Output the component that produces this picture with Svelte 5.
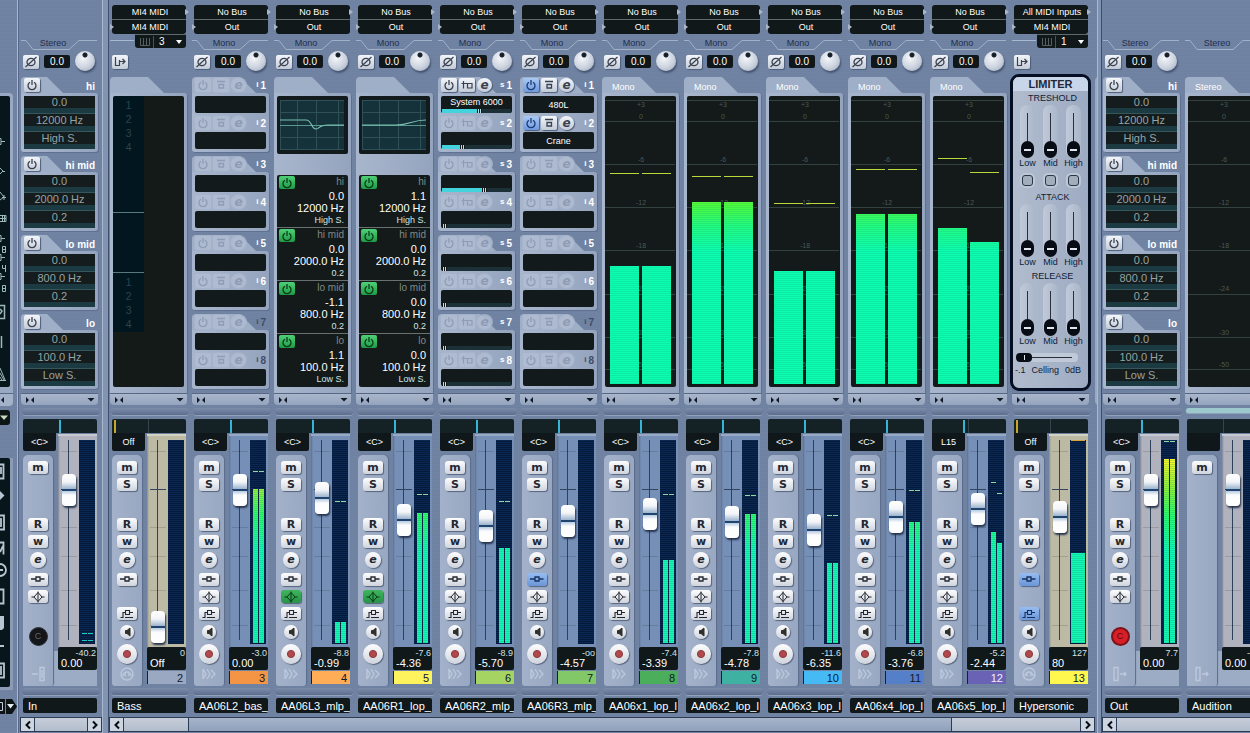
<script>
  const eqFlat = [
    { band: 'hi', rows: ['0.0', '12000 Hz', 'High S.'] },
    { band: 'hi mid', rows: ['0.0', '2000.0 Hz', '0.2'] },
    { band: 'lo mid', rows: ['0.0', '800.0 Hz', '0.2'] },
    { band: 'lo', rows: ['0.0', '100.0 Hz', 'Low S.'] }
  ];
  const bands = (a, b, c, d) => eqFlat.map((e, i) => ({ band: e.band, rows: [[a, b, c, d][i], e.rows[1], e.rows[2]] }));

  const emptyInserts = Array.from({ length: 8 }, () => ({}));
  const inputs = [
    { name: 'In', kind: 'bus', gain: true, view: 'eq', pan: '<C>', panPos: 36, fader: 139, val: '0.00', peak: '-40.2', buttons: 'm.RWeid', clip: 'off', glyph: 'in', levels: [0, 0], peaks: [2, 9], cold: true }
  ];
  const tracks = [
    { name: 'Bass', kind: 'midi', inp: 'MI4 MIDI', out: 'MI4 MIDI', midi: '3', view: 'midi', pan: 'Off', panPos: 2, fader: 2, val: 'Off', peak: '0', no: 2, color: '#9aa9c1', buttons: 'mSRWei.bsr', glyph: 'midi', levels: [] },
    { name: 'AA06L2_bas_', view: 'ins', slots: emptyInserts, dim: 7, fader: 139, val: '0.00', peak: '-3.0', no: 3, color: '#f49445', levels: [154, 154], peaks: [171, 171] },
    { name: 'AA06L3_mlp_', view: 'curve', curve: 'M0 20H26C32 20 31 29 36 29C40 29 38 25 48 25H64', eq: bands('0.0', '0.0', '-1.1', '1.1'), fader: 131, val: '-0.99', peak: '-8.8', no: 4, color: '#ffad57', levels: [21, 21], peaks: [141, 141], on: 'd' },
    { name: 'AA06R1_lop_', view: 'curve', curve: 'M0 25H34C48 25 50 20 64 20', eq: bands('1.1', '0.0', '0.0', '0.0'), fader: 109, val: '-4.36', peak: '-7.6', no: 5, color: '#fff35d', levels: [130, 130], peaks: [148, 148], on: 'd' },
    { name: 'AA06R2_mlp_', view: 'send', slots: [{ name: 'System 6000', on: true, level: 50 }, { level: 26 }, { level: 58 }, { level: 0 }, { level: 0 }, { level: 0 }, { level: 0 }, { level: 0 }], fader: 103, val: '-5.70', peak: '-8.9', no: 6, color: '#a6d463', levels: [95, 95], peaks: [141, 141] },
    { name: 'AA06R3_mlp_', view: 'ins', slots: [{ name: '480L', on: true }, { name: 'Crane', on: true }, {}, {}, {}, {}, {}, {}], dim: 7, fader: 108, val: '-4.57', peak: '-oo', no: 7, color: '#82c869', levels: [0, 0], peaks: [], on: 'i' },
    { name: 'AA06x1_lop_l', view: 'meter', big: [118, 118], bigPeaks: [210, 210], fader: 115, val: '-3.39', peak: '-7.4', no: 8, color: '#4bae5b', levels: [83, 83], peaks: [148, 148] },
    { name: 'AA06x2_lop_l', view: 'meter', big: [182, 182], bigPeaks: [207, 207], fader: 107, val: '-4.78', peak: '-7.8', no: 9, color: '#3eb1a3', levels: [129, 129], peaks: [147, 147] },
    { name: 'AA06x3_lop_l', view: 'meter', big: [113, 113], bigPeaks: [180, 180], fader: 99, val: '-6.35', peak: '-11.6', no: 10, color: '#46baf5', levels: [80, 80], peaks: [127, 127] },
    { name: 'AA06x4_lop_l', view: 'meter', big: [170, 170], bigPeaks: [214, 214], fader: 112, val: '-3.76', peak: '-6.8', no: 11, color: '#557fc9', levels: [121, 121], peaks: [152, 152] },
    { name: 'AA06x5_lop_l', view: 'meter', big: [156, 142], bigPeaks: [225, 211], pan: 'L15', panPos: 31, fader: 120, val: '-2.44', peak: '-5.2', no: 12, color: '#6a62b4', light: true, levels: [111, 100], peaks: [160, 149] },
    { name: 'Hypersonic', kind: 'midi', inp: 'All MIDI Inputs', out: 'MI4 MIDI', midi: '1', view: 'limiter', pan: 'Off', panPos: 2, fader: 112, val: '80', peak: '127', no: 13, color: '#fff74e', buttons: 'mSRWei.bsr', on: 'ib', glyph: 'midi', levels: [90], peaks: [202] }
  ].map((t) => ({
    kind: 'audio', inp: 'No Bus', out: 'Out', mode: t.kind === 'midi' ? '' : 'Mono', gain: t.kind !== 'midi',
    pan: '<C>', panPos: 36, buttons: 'mSRWeidbsr', glyph: 'track', on: '', ...t
  }));
  const outputs = [
    { name: 'Out', kind: 'bus', gain: true, view: 'eq', pan: '<C>', panPos: 36, fader: 139, val: '0.00', peak: '7.7', buttons: 'mSRWeid', clip: 'on', glyph: 'out', levels: [184, 184], peaks: [201, 201] },
    { name: 'Audition', kind: 'bus', view: 'meter', big: [], bigPeaks: [], pan: '', panPos: -1, fader: 139, val: '0.00', peak: '-oo', buttons: 'm', glyph: 'out', levels: [0, 0], peaks: [], tint: true }
  ];

  const scale = [['+3', 4, 11], ['0', 25, 23], ['-6', 68, 66], ['-12', 111, 109], ['-18', 154, 152], ['-24', 198, 195], ['-30', 241, 239], ['-50', 273, 271]];
  const labels = { m: 'Mute', S: 'Solo', R: 'Read', W: 'Write', e: 'Edit', i: 'Inserts', d: 'Equalizer', b: 'Sends', s: 'Monitor', r: 'Record' };
  const order = 'mSRWeidbsr'.split('');
  const limiterGroups = ['TRESHOLD', 'ATTACK', 'RELEASE'];
</script>

{#snippet icon(kind)}
  <svg viewBox="0 0 16 12" width="16" height="12" fill="none" stroke="currentColor" stroke-width="1" aria-hidden="true">
    {#if kind === 'power'}
      <path d="M6 3.2A4 4 0 1 0 10 3.2M8 1V6" stroke-width="1.3" />
    {:else if kind === 'phase'}
      <ellipse cx="8" cy="6" rx="4" ry="3.6" stroke-width="1.3" /><path d="M2.5 11L13.5 1" stroke-width="1.2" />
    {:else if kind === 'route'}
      <path d="M3.500 1V9.500H7.500V4M7.500 5.500H13M10.500 3L13 5.500L10.500 8" stroke-width="1.2" />
    {:else if kind === 'bypass'}
      <path d="M4 2.500H12M6 5.500H10.500V9H6Z" stroke-width="1.3" />
    {:else if kind === 'send'}
      <path d="M4.500 2V9.500M2.500 4.500H8.500M8.500 4.500H13V9H8.500Z" stroke-width="1.2" />
    {:else if kind === 'i'}
      <path d="M1 6H6M10 6H14.500M6 4H10V8H6Z" stroke-width="1.3" />
    {:else if kind === 'd'}
      <path d="M1.500 6H4L8 1.500L12 6L8 10.500L4 6M12 6H14.500M8 0.500V11.500" />
    {:else if kind === 'b'}
      <path d="M1.500 9.500H4V4.500H6.500M6.500 2.500H10.500V6.500H6.500ZM10.500 4.500H14M6 9.500H14" stroke-width="1.1" />
    {:else if kind === 's'}
      <path d="M5.500 4.500H7L10 2V10L7 7.500H5.500Z" fill="currentColor" />
    {:else if kind === 'r'}
      <circle cx="8" cy="6" r="3.600" fill="#b0484c" stroke="#8c3c40" />
    {/if}
  </svg>
{/snippet}

{#snippet glyph(kind)}
  <svg class="glyph" viewBox="0 0 20 16" width="20" height="16" fill="none" stroke="#bcc8dc" stroke-width="1.400" aria-hidden="true">
    {#if kind === 'track'}
      <path d="M4 3L7 8L4 13M8 3L11 8L8 13M12 4L16 8L12 12M4 3V13" />
    {:else if kind === 'midi'}
      <circle cx="10" cy="8" r="6" /><path d="M6 10A4 4 0 0 1 14 10M8 10V7M12 10V7" />
    {:else if kind === 'in'}
      <path d="M4 8H10M12 1.500H16V14.500H12Z" /><path d="M14 4V12" />
    {:else}
      <path d="M4 1.500H8V14.500H4ZM10 8H16M14 6L16 8L14 10" />
    {/if}
  </svg>
{/snippet}

{#snippet eqRack()}
  <div class="racks">
    {#each eqFlat as e}
      <section class="rack tab-eq">
        <header><button class="sm" aria-label="{e.band} band on">{@render icon('power')}</button><h3>{e.band}</h3></header>
        <div class="frame eqf">
          {#each e.rows as r}<p>{r}</p>{/each}
        </div>
      </section>
    {/each}
  </div>
{/snippet}

{#snippet slotButtons(ch, s)}
  <span class="slotb" class:off={!s.on} class:blue={s.on && ch.view === 'ins'}>
    <button class="sm pw" aria-label="Slot power">{@render icon('power')}</button>
    <button class="sm" aria-label="Slot bypass">{@render icon(ch.view === 'send' ? 'send' : 'bypass')}</button>
    <button class="sm rd" aria-label="Edit slot">e</button>
  </span>
{/snippet}

{#snippet slotNo(ch, n)}
  <b class="sno" class:dim={ch.dim && n >= ch.dim}><small>{ch.view === 'send' ? 's' : 'i'}</small>{n}</b>
{/snippet}

{#snippet slotScreen(ch, s)}
  <div class="slot">
    <span>{s.name ?? ''}</span>
    {#if ch.view === 'send'}
      <i class="lvl"><i style="width:{s.level}%"></i></i>
    {/if}
  </div>
{/snippet}

{#snippet slotRack(ch)}
  <div class="racks">
    {#each [0, 2, 4, 6] as k}
      <section class="rack {ch.view === 'send' ? 'tab-send' : 'tab-ins'}">
        <header>{@render slotButtons(ch, ch.slots[k])}{@render slotNo(ch, k + 1)}</header>
        <div class="frame">
          {@render slotScreen(ch, ch.slots[k])}
          <div class="mid">{@render slotButtons(ch, ch.slots[k + 1])}{@render slotNo(ch, k + 2)}</div>
          {@render slotScreen(ch, ch.slots[k + 1])}
        </div>
      </section>
    {/each}
  </div>
{/snippet}

{#snippet insertView(ch)}
  {#if ch.view === 'eq'}
    {@render eqRack()}
  {:else if ch.view === 'ins' || ch.view === 'send'}
    {@render slotRack(ch)}
  {:else if ch.view === 'limiter'}
    <section class="limiter">
      <h2>LIMITER</h2>
      {#each limiterGroups as g, gi}
        <h4>{g}</h4>
        <div class="trio">
          {#each ['Low', 'Mid', 'High'] as b}
            <label><input type="range" class="lim" min="0" max="100" value="0" />{b}</label>
          {/each}
        </div>
        {#if gi === 0}
          <div class="trio checks">
            {#each ['Low', 'Mid', 'High'] as b}<span><input type="checkbox" aria-label="{b} link" /></span>{/each}
          </div>
        {/if}
      {/each}
      <input type="range" class="ceil" min="0" max="100" value="0" aria-label="Ceiling" />
      <div class="ceiltext"><span>-.1</span><span>Celling</span><span>0dB</span></div>
    </section>
  {:else}
    <section class="panel">
      <header class="ptab">{ch.view === 'meter' ? (ch.kind === 'bus' ? 'Stereo' : 'Mono') : ''}</header>
      <div class="frame tall">
        {#if ch.view === 'midi'}
          <div class="screen midi">
            <ol><li>1</li><li>2</li><li>3</li><li>4</li></ol>
            <div class="gap"></div>
            <ol><li>1</li><li>2</li><li>3</li><li>4</li></ol>
          </div>
        {:else if ch.view === 'curve'}
          <div class="graph">
            <svg viewBox="0 0 64 50" width="64" height="50" fill="none">
              <rect width="64" height="50" fill="#15323b" />
              <path d="M17.500 0V50M36.500 0V50M58.500 0V50M0 12.500H64M0 37.500H64M0.500 0V50M0 0.500H64M0 49.500H64" stroke="#2f5058" />
              <path d="M0 25.500H64" stroke="#5a978e" />
              <path d={ch.curve} stroke="#78bfae" stroke-width="1.200" />
            </svg>
          </div>
          <div class="screen bands">
            {#each ch.eq as e}
              <div class="band">
                <div class="bh"><button class="sm green" aria-label="{e.band} band on">{@render icon('power')}</button><span>{e.band}</span></div>
                <p>{e.rows[0]}</p><p>{e.rows[1]}</p><p class="ty">{e.rows[2]}</p>
              </div>
            {/each}
          </div>
        {:else if ch.view === 'meter'}
          <div class="screen big">
            <svg viewBox="0 0 70 291" width="70" height="291">
              {#each scale as [t, ly, ty]}
                <path d="M0 {ly}.500H70" stroke="#33423e" />
                <text x="36" y={ty} text-anchor="middle">{t}</text>
              {/each}
            </svg>
            <div class="bars">
              {#each ch.big as h, i}
                <div class="lane"><div class="bar" style="height:{h}px"></div><i class="pk" style="bottom:{ch.bigPeaks[i]}px"></i></div>
              {/each}
            </div>
          </div>
        {/if}
      </div>
    </section>
  {/if}
{/snippet}

{#snippet strip(ch)}
  <article class="strip {ch.kind}">
    <div class="routing">
      {#if ch.inp}
        <span class="r1"><select aria-label="{ch.name} input"><option>{ch.inp}</option></select></span>
        <span class="r2"><select aria-label="{ch.name} output"><option>{ch.out}</option></select></span>
      {/if}
    </div>
    <div class="mode">
      {#if ch.midi}
        <svg viewBox="0 0 76 14" width="76" height="14" fill="none" aria-hidden="true"><path d="M0 1.500H24" stroke="#a8b9cf" /></svg>
        <div class="chan">
          <svg viewBox="0 0 10 8" width="10" height="8" aria-hidden="true"><path d="M0.500 0V7.500H9.500V0M3.500 0V7M6.500 0V7" fill="none" stroke="#56605e" /></svg>
          <select aria-label="{ch.name} MIDI channel"><option>{ch.midi}</option></select>
        </div>
      {:else}
        <svg viewBox="0 0 76 14" width="76" height="14" fill="none" aria-hidden="true"><path d="M0 1.500H5L12 10.500H48L58 1.500H76" stroke="#a0b1c9" /></svg>
        <span>{ch.kind === 'bus' ? 'Stereo' : 'Mono'}</span>
      {/if}
    </div>
    <div class="gain">
      {#if ch.midi}
        <button class="sm ph" aria-label="Input transformer">{@render icon('route')}</button>
      {:else if ch.gain}
        <button class="sm ph" aria-label="Phase">{@render icon('phase')}</button>
        <input class="gv" value="0.0" aria-label="{ch.name} gain value" />
        <input class="knob" type="range" aria-label="{ch.name} gain" />
      {/if}
    </div>
    <div class="view">{@render insertView(ch)}</div>
    <div class="foot">
      <button aria-label="Narrow"><svg viewBox="0 0 10 6" width="10" height="6"><path d="M1 0V6L4 3ZM9 0V6L6 3Z" fill="#101826" /></svg></button>
      <button aria-label="Choose view"><svg viewBox="0 0 8 5" width="8" height="5"><path d="M0.500 1H7.500L4 4.500Z" fill="#101826" /></svg></button>
    </div>
    <div class="sep" class:tint={ch.tint}></div>
    <div class="pan"><i class:gold={ch.kind === 'midi'} style="margin-left:{ch.panPos}px" class:none={ch.panPos < 0}></i></div>
    <div class="body">
      <div class="left">
        <output class="pv">{ch.pan}</output>
        <div class="btns">
          {#each order as k}
            {#if ch.clip && k === 's'}
              <span class="cell k-c"><button class="clip" class:hot={ch.clip === 'on'} aria-label="Clip indicator">C</button></span>
            {:else if !(ch.clip && k === 'r')}
              <span class="cell k-{k}">
                {#if ch.buttons.includes(k)}
                  <button class="key" class:round={'esr'.includes(k)} class:lit={ch.on?.includes(k)} aria-label={labels[k]}>
                    {#if 'mSRWe'.includes(k)}{k === 'W' ? 'w' : k}{:else}{@render icon(k)}{/if}
                  </button>
                {/if}
              </span>
            {/if}
          {/each}
          {@render glyph(ch.glyph)}
        </div>
      </div>
      <div class="right">
        <div class="fader">
          <input type="range" class="fd" min="0" max="174" value={ch.fader} aria-label="{ch.name} level" />
          <div class="meter">
            {#each ch.levels as h, i}
              <div class="lane">
                <div class="bar" style="height:{h}px"></div>
                {#if ch.cold}
                  {#each ch.peaks as p}<i class="pk cold" style="bottom:{p}px"></i>{/each}
                {:else if ch.peaks[i]}<i class="pk" style="bottom:{ch.peaks[i]}px"></i>{/if}
              </div>
            {/each}
          </div>
        </div>
        <div class="vals"><output>{ch.peak}</output><input value={ch.val} aria-label="{ch.name} level value" /></div>
        <div class="no" class:light={ch.light} class:blank={!ch.no} style="background:{ch.color ?? 'transparent'}">{ch.no ?? ''}</div>
      </div>
    </div>
    <div class="sep low"></div>
    <input class="name" value={ch.name} aria-label="Channel name" />
  </article>
{/snippet}

{#snippet arrow(dir)}
  <button class="arr" aria-label="Scroll {dir}"><svg viewBox="0 0 8 10" width="8" height="10" fill="none" stroke="#080c14" stroke-width="2"><path d={dir === 'left' ? 'M6 1.500L2.500 5L6 8.500' : 'M2 1.500L5.500 5L2 8.500'} /></svg></button>
{/snippet}

<main>
  <aside>
    <div class="railtop">
      <svg viewBox="0 0 10 291" width="10" height="291" fill="none" stroke="#9db8b8" aria-hidden="true">
        <path d="M0 42.500H1V48.500H0M1 45.500H5M0 72L3 75L0 78M3 75.500H5M0 96L4 101L0 104M2 101.500H6M4 99V104M0 119.500H6V125.500H0M0 122.500H6M2.500 119V126M4.500 119V126" />
        <path d="M0 139.500H1V145.500H0M1 142.500H5M0 158.500H1V164.500H0M1 161.500H5M0 177.500H1V183.500H0M1 180.500H5" />
        <path d="M2.500 150.500H5.500V156.500H2.500ZM2.500 153.500H5.500M2.500 169V172.500H5.500M5.500 169V176M2.500 189.500H5.500V195.500H2.500ZM2.500 192.500H5.500" />
        <path d="M0 209.500H4.500V222.500H0M0 213L2 215L0 218M1.500 240V252" stroke-width="1.500" />
        <path d="M0 272L5 284M0 277L4 284M0 281L2 284M0 284.500H6" />
      </svg>
    </div>
    <button class="railfoot" aria-label="Collapse"><svg viewBox="0 0 5 6" width="5" height="6"><path d="M4 0V6L1 3Z" fill="#101826" /></svg></button>
    <button class="raildrop" aria-label="Channel types"><svg viewBox="0 0 8 5" width="8" height="5"><path d="M0 0.500H8L4 5Z" fill="#c9d9c0" /></svg></button>
    <div class="railbot">
      <svg viewBox="0 0 10 229" width="10" height="229" fill="none" stroke="#b7c5d2" stroke-width="1.800" aria-hidden="true">
        <path d="M0 6.500H3.500V20.500H0M1 9V16" /><path d="M0 33L4.500 37.500L0 42Z" fill="#b7c5d2" stroke="none" />
        <path d="M0 57.500H4V71.500H0M1 60V69M0 84.500H3.500V96.500M0 94L3 88" /><path d="M0 106A6 6 0 0 1 0 118M0 112H3" />
        <path d="M0 131.500H3.500V145.500H0M0 188H4M0 205.500H4V219.500H0M1 208V217" /><path d="M0 158H4V170L2 172H0Z" fill="#b7c5d2" stroke="none" />
      </svg>
    </div>
    <button class="railend" aria-label="Presets"><svg viewBox="0 0 17 15" width="17" height="15"><path d="M0 0H5V15H0Z" fill="#0c1416" /><path d="M0 3.500H2.500V11.500H0" stroke="#c5cedb" fill="none" /><path d="M6 0H12L17 7.500L12 15H6Z" fill="#0c1416" /><path d="M7 5H14L10.500 9.500Z" fill="#e5ecf4" /></svg></button>
  </aside>

  <section class="group ins">
    <div class="strips">{#each inputs as c}{@render strip(c)}{/each}</div>
    <div class="scroll">{@render arrow('left')}<i class="free"></i>{@render arrow('right')}</div>
  </section>
  <section class="group trk">
    <div class="strips">
      {#each tracks as c}{@render strip(c)}{/each}
      <div class="next"></div>
    </div>
    <div class="scroll">{@render arrow('left')}<i class="lead"></i><i class="thumb"></i><i class="free"></i>{@render arrow('right')}</div>
  </section>
  <section class="group outs">
    <div class="strips">{#each outputs as c}{@render strip(c)}{/each}</div>
    <div class="scroll">{@render arrow('left')}<i class="free"></i></div>
  </section>
</main>

<style>
  :global(body) { background: #7184a3; }
  main, main :global(*) { box-sizing: border-box; }
  main {
    display: flex; min-height: 100vh; overflow: hidden;
    background: repeating-linear-gradient(#7184a3 0 1px, #6e81a1 1px 2px);
    font-family: "Liberation Sans", Arial, sans-serif; font-size: 9px; line-height: 11px; color: #fff;
  }
  button, input, select { font: inherit; color: inherit; margin: 0; padding: 0; border: 0; background: none; appearance: none; border-radius: 0; min-width: 0; display: block; }
  h2, h3, h4, p, ol { margin: 0; padding: 0; font-weight: normal; list-style: none; }
  svg { display: block; flex: none; }

  aside { flex: 0 0 18px; display: flex; flex-direction: column; border-right: 1px solid #a9b8cd; box-shadow: 1px 0 #56678a; padding-top: 93px; }
  .railtop { background: #9aa9c3; padding: 3px 3px 6px 0; width: 13px; border-radius: 0 4px 0 0; }
  .railtop svg, .railbot svg { background: #07161a; border-radius: 0 2px 2px 0; }
  .railfoot { height: 13px; width: 13px; background: #a3b1c9; border-top: 1px solid #5a6a86; border-radius: 0 0 4px 0; }
  .raildrop { margin-top: 4px; height: 15px; width: 10px; background: #0c1416; border-radius: 0 3px 3px 0; }
  .railbot { margin-top: 33px; background: #8c9bb5; padding: 0 3px 3px 0; width: 13px; }
  .railend { margin-top: 9px; }

  .group { display: flex; flex-direction: column; flex: none; overflow: hidden; }
  .ins { width: 91px; padding-left: 2px; border-right: 1px solid #3e4e6c; box-shadow: inset -5px 0 #8194b1, inset -6px 0 #a9b8cd; padding-right: 6px; }
  .trk { flex: 1 1 0; min-width: 0; }
  .outs { flex: 0 1 153px; padding-left: 4px; border-left: 1px solid #a9b8cd; box-shadow: inset 3px 0 #7f92b0, inset 4px 0 #3e4e6c; }
  .strips { display: flex; height: 717px; overflow: hidden; }
  .next { flex: none; width: 60px; height: 328px; margin: 77px 0 0 2px; background: #9aa9c3; border-radius: 4px; }

  .strip { flex: 0 0 82px; padding: 0 5px 0 3px; display: flex; flex-direction: column; }
  .routing { height: 34px; padding-top: 5px; }
  .routing span { display: block; position: relative; background: #11181a; height: 14px; }
  .r1 { border-radius: 3px 3px 0 0; }
  .routing .r2 { border-radius: 0 0 3px 3px; border-top: 1px solid #5d6b6d; height: 15px; }
  .r1::after, .r2::before { content: ""; position: absolute; top: 4px; right: -3px; border: 3px solid transparent; border-left: 4px solid #a9b6c9; border-right: 0; }
  .r2::before { right: auto; left: -2px; }
  .routing select { width: 100%; height: 14px; text-align: center; text-align-last: center; font-size: 9px; padding-left: 2px; }
  option { color: #000; }

  .mode { height: 17px; display: grid; margin: 0 -2px; align-items: start; }
  .mode > * { grid-area: 1 / 1; }
  .mode > svg { margin-top: 5px; }
  .mode > span { color: #1d2f52; text-align: center; width: 60px; padding-top: 4px; margin-left: 2px; }
  .chan { justify-self: end; margin-right: 2px; width: 51px; height: 14px; background: #11181a; border-radius: 0 0 3px 3px; display: flex; align-items: center; padding-left: 5px; gap: 3px; border-top: 1px solid #5d6b6d; }
  .chan select { flex: 1; height: 12px; border-left: 1px solid #49545a; padding-left: 5px; font-size: 10px; }
  .chan::after { content: ""; border: 3px solid transparent; border-top: 4px solid #fff; border-bottom: 0; margin-right: 4px; }
  .gain { height: 26px; display: flex; align-items: flex-start; gap: 5px; }
  .sm { height: 14px; width: 16px; background: linear-gradient(#f3f6fa, #c3cbd8); border-radius: 2px; color: #39414f; display: grid; place-items: center; box-shadow: 1px 1px 1px #4d5c78; flex: none; }
  .ph { margin-top: 4px; }
  .gv { width: 26px; height: 13px; margin-top: 4px; background: #10171a; border-radius: 2px; text-align: center; font-size: 10px; }
  .knob { width: 20px; height: 20px; border-radius: 50%; background: radial-gradient(circle at 10px 4px, #16202c 0 2px, transparent 3px), radial-gradient(circle at 40% 35%, #f4f6f9, #ccd3df 55%, #96a2b5); box-shadow: 1px 2px 2px #44536f; }
  .knob::-webkit-slider-thumb { appearance: none; width: 1px; }

  .view { height: 316px; margin: 0 -1px 0 -2px; display: flex; flex-direction: column; }
  .racks { display: grid; grid-auto-rows: 75px; row-gap: 4px; }
  .rack { display: flex; flex-direction: column; }
  .rack header { height: 16px; position: relative; display: flex; align-items: center; padding: 0 3px; gap: 2px; isolation: isolate; flex: none; }
  .rack header::before, .ptab::before { content: ""; position: absolute; z-index: -1; inset: 0; background: #a0afc8; border-radius: 4px 0 0 0; clip-path: polygon(0 0, var(--t) 0, calc(var(--t) + 16px) 100%, 0 100%); }
  .tab-eq { --t: 26px; } .tab-ins { --t: 48px; } .tab-send { --t: 42px; } .panel { --t: 38px; }
  .rack h3 { font-size: 10px; font-weight: bold; margin-left: auto; padding-top: 3px; }
  .frame { background: linear-gradient(90deg, #a8b6cd, #95a4be); padding: 3px; border-radius: 0 3px 3px 3px; box-shadow: 1px 1px 0 #5f7090; }
  .rack .frame { height: 59px; }
  .eqf p { height: 18px; background: #141c1d; border-bottom: 5px solid #1c3a41; text-align: center; font-size: 11px; line-height: 13px; color: #98a3a2; border-top: 1px solid #35575b; }
  .eqf p:first-child { height: 17px; border-top: 0; }
  .slotb { display: flex; gap: 2px; }
  .slotb .rd { border-radius: 50%; width: 15px; font: italic bold 12px/12px "DejaVu Sans", sans-serif; }
  .off .sm { background: #b1bdd2; color: #8b99b2; box-shadow: 0 0 0 1px #a6b4cb; opacity: .85; }
  .blue .pw { background: linear-gradient(#a9c8f3, #6e9ade); color: #1d3a78; }
  .sno { margin-left: auto; font-size: 10px; padding-top: 2px; }
  .sno small { font-size: 8px; margin-right: 2px; position: relative; top: -2px; }
  .sno.dim { color: #3f4c66; }
  .slot { height: 17px; background: #131a1b; border-radius: 2px; text-align: center; display: flex; flex-direction: column; }
  .slot span { flex: 1; line-height: 13px; }
  .tab-ins .slot span { line-height: 18px; font-size: 9px; }
  .lvl { display: flex; align-items: center; height: 4px; margin: 0 1px; background: #1c3038; }
  .lvl i { height: 4px; background: #43d3dc; }
  .lvl::after { content: ""; width: 5px; height: 4px; background: repeating-linear-gradient(90deg, #11181a 0 1px, #b5e3e6 1px 2px); }
  .mid { height: 19px; display: flex; align-items: center; }

  .panel { display: flex; flex-direction: column; flex: 1; }
  .ptab { height: 16px; position: relative; isolation: isolate; padding: 5px 0 0 10px; flex: none; }
  .tall { flex: 1; border-radius: 0 3px 0 0; }
  .screen { background: #131a19; border-radius: 2px; overflow: hidden; }
  .screen.midi { height: 291px; background: linear-gradient(90deg, #01161e 31px, transparent 31px) 0 0 / 100% 236px no-repeat, #131a17; color: #2c434d; font-size: 11px; }
  .midi ol { width: 31px; text-align: center; padding-top: 2px; }
  .midi li { line-height: 14px; }
  .gap { width: 31px; height: 61px; border: solid #5a777c; border-width: 1px 0; margin-top: 58px; }
  .graph { height: 58px; background: #131a1b; padding: 4px 3px; border-radius: 2px; margin-bottom: 21px; }
  .bands { height: 212px; }
  .band { height: 53px; border-bottom: 1px solid #67716f; text-align: right; padding-right: 4px; font-size: 11px; }
  .band:last-child { border: 0; }
  .bh { display: flex; justify-content: space-between; font-size: 10px; color: #7f8a88; height: 15px; padding: 1px 0 0 2px; }
  .bh .green { height: 13px; }
  .green { background: linear-gradient(#4fd077, #1f9a47); color: #083c18; box-shadow: none; }
  .band p { line-height: 12px; }
  .band .ty { font-size: 9px; color: #cfe6e6; }
  .big { display: grid; height: 291px; }
  .big > * { grid-area: 1 / 1; }
  .big text { font: 7px "Liberation Sans", sans-serif; fill: #4b5955; }
  .bars { display: flex; gap: 3px; padding: 0 0 3px 5px; }
  .lane { position: relative; flex: 0 0 29px; display: flex; align-items: flex-end; }
  .bar { flex: 1; background: repeating-linear-gradient(transparent 0 1px, #0b7d6222 1px 2px), linear-gradient(#e8f52a 0, #8cf03a 60px, #4ffa3a 108px, #22fb80 130px, #0cfdaf 155px) bottom / 100% 288px no-repeat; }
  .pk { position: absolute; left: 0; right: 0; height: 1px; background: #b9d83a; }

  .foot { height: 12px; margin: 0 -1px 0 -2px; border-top: 1px solid #566683; background: linear-gradient(#a9b6cc, #95a4be); border-radius: 0 0 4px 4px; display: flex; justify-content: space-between; align-items: center; padding: 0 3px 0 4px; }
  .sep { height: 7px; margin: 3px -3px 4px -1px; border-radius: 4px; background: linear-gradient(#7d8eaa, #5c6e8e); box-shadow: 0 1px #8fa0ba; flex: none; }
  .sep.tint { background: #9cc9cc; height: 5px; margin-bottom: 6px; }
  .pan { height: 14px; background: linear-gradient(90deg, transparent 36px, #33444a 36px 37px, transparent 37px), #142226; border-radius: 2px 2px 0 0; display: flex; padding: 1px 0; flex: none; }
  .pan i { width: 2px; height: 13px; background: #35b6d6; }
  .pan i.gold { background: #c7a52a; }
  .pan i.none { display: none; }

  .body { display: flex; justify-content: space-between; height: 253px; }
  .left { width: 33px; }
  .pv { display: block; height: 18px; background: #10171a; text-align: center; line-height: 18px; border-radius: 0 0 2px 2px; }
  .btns { margin: 4px 3px 0 0; height: 231px; background: linear-gradient(90deg, #a3b1ca, #99a8c2); border-radius: 5px 5px 3px 3px; display: flex; flex-direction: column; align-items: center; padding-top: 4px; box-shadow: 1px 0 1px #5a6b8b; }
  .cell { display: grid; place-items: center; height: 17px; flex: none; }
  .k-S { margin-bottom: 23px; }
  .k-e { height: 20px; } .k-i { height: 18px; } .k-s { height: 20px; } .k-r { height: 23px; }
  .k-c { height: 43px; align-content: start; padding-top: 5px; }
  .key { width: 20px; height: 13px; border-radius: 3px; background: linear-gradient(#fdfdfe, #cfd4dd); box-shadow: 1px 1px 1px #56637c; color: #23272f; font: bold 11px/12px "DejaVu Sans", sans-serif; display: grid; place-items: center; }
  .key.round { width: 16px; height: 16px; border-radius: 50%; }
  .k-e .key { font-style: italic; }
  .k-s .key { width: 14px; height: 14px; color: #2e2e2a; }
  .k-r .key { width: 20px; height: 20px; }
  .key.lit { background: linear-gradient(#96bdf2, #6a95d8); color: #16305e; }
  .k-d .key.lit { background: linear-gradient(#3fb55c, #28924a); color: #0a3a17; }
  .clip { width: 19px; height: 19px; border-radius: 50%; background: #14161a; color: #5d6670; font-size: 9px; border: 1px solid #2c3038; }
  .clip.hot { background: #d81e26; color: #5a060a; border: 2px solid #7c1218; }
  .glyph { margin-top: 1px; }

  .right { width: 39px; padding-top: 1px; display: flex; flex-direction: column; }
  .fader { height: 213px; display: flex; padding: 4px 2px 4px 3px; --c: #758fb6; border-top: 2px solid #98a9c3; background:
    linear-gradient(90deg, transparent 10px, #2f4059 10px 11px, transparent 11px) 0 4px / 100% 200px no-repeat,
    linear-gradient(90deg, #33415e66, transparent 2px 20px, transparent), var(--c); }
  .midi .fader { --c: #bcb9a4; border-top-color: #d3d1c0; }
  .bus .fader { --c: #b0b2bd; border-top-color: #c6c9d2; }
  .fd { writing-mode: vertical-lr; direction: rtl; width: 16px; height: 206px; margin: -1px 2px 0 0; background:
    linear-gradient(transparent 50px, #33445f 50px 51px, transparent 51px),
    linear-gradient(transparent 12px, #0002 12px 13px, transparent 13px 88px, #0002 88px 89px, transparent 89px 117px, #0002 117px 118px, transparent 118px 151px, #0002 151px 152px, transparent 152px 186px, #0002 186px 187px, transparent 187px); }
  .fd::-webkit-slider-thumb { appearance: none; width: 14px; height: 32px; border-radius: 4px; background: linear-gradient(#fff, #f3f5f8 25%, #9fb6cf 46%, #1f4470 46% 52%, #b9cde2 54%, #fbfcfd 66%, #fff); box-shadow: 1px 2px 2px #26344e; }
  .meter { width: 16px; height: 204px; background: repeating-linear-gradient(#0a2852 0 1px, #051a3a 1px 2px); display: flex; gap: 1px; padding: 0 2px 1px 3px; }
  .meter .lane { flex: 1 1 0; }
  .meter .bar { background: repeating-linear-gradient(transparent 0 1px, #08705a33 1px 2px), linear-gradient(#f6f52a 0 20px, #8df23c 50px, #2dfc6c 75px, #14f8b4 110px) bottom / 100% 203px no-repeat; }
  .midi .meter { padding: 0 1px 1px 1px; }
  .meter .pk { background: #8fd8a0; }
  .meter .pk.cold { background: #1fc8c0; }
  .midi .meter .pk { background: #d9a33a; }
  .vals { height: 23px; background: #11181a; border-radius: 2px; padding: 1px 1px 0 3px; margin: 0 0 1px; }
  .vals output { display: block; text-align: right; height: 9px; line-height: 11px; color: #cfe3e6; }
  .vals input { width: 100%; height: 12px; font-size: 11px; line-height: 12px; }
  .no { height: 13px; border-left: 1px solid #142038; color: #10182a; font-size: 11px; line-height: 14px; text-align: right; padding-right: 3px; }
  .no.blank { border: 0; }
  .no.light { color: #f2efff; }
  .bus .body { background: linear-gradient(#9dacc5, #9dacc5) 0 218px / 100% 35px no-repeat; }
  .low { margin: 2px -3px 3px -1px; }
  .name { height: 15px; width: 100%; background: #11181a; border-radius: 2px; font-size: 11px; padding-left: 5px; flex: none; }

  .limiter { margin: -3px -2px 0 -2px; height: 317px; border: 3px solid #050e22; border-radius: 9px; background: linear-gradient(90deg, #b1bccd, #9dabc2); color: #101c36; display: flex; flex-direction: column; overflow: hidden; flex: none; }
  .limiter h2 { font-size: 11px; font-weight: bold; line-height: 14px; height: 14px; text-align: center; background: #c9d5e8; color: #20283a; }
  .limiter h4 { text-align: center; line-height: 15px; height: 14px; padding-left: 4px; }
  .trio { display: grid; grid-template-columns: repeat(3, 23px); justify-content: center; flex: none; }
  .trio label { display: flex; flex-direction: column; align-items: center; height: 65px; }
  .lim { writing-mode: vertical-lr; direction: rtl; width: 15px; height: 53px; flex: none; border-radius: 7px; background: linear-gradient(#27303c, #27303c) 7px 8px / 1px 34px no-repeat, linear-gradient(90deg, #c0cada, #aab6ca); }
  .lim::-webkit-slider-thumb { appearance: none; width: 13px; height: 17px; border-radius: 7px; background: linear-gradient(#dfe6ee, #dfe6ee) center / 7px 2px no-repeat, #080c14; }
  .checks { height: 20px; align-items: center; justify-items: center; }
  .checks input { width: 11px; height: 11px; border: 1px solid #2b3648; border-radius: 3px; background: #a3aebd; box-shadow: 0 0 0 2px #bcc7d6; }
  .ceil { width: 62px; height: 9px; margin: 5px 0 3px 3px; flex: none; border-radius: 4px; background: linear-gradient(#27303c, #27303c) 8px 4px / 48px 1px no-repeat, #bfc9d8; }
  .ceil::-webkit-slider-thumb { appearance: none; width: 16px; height: 9px; border-radius: 4px; background: linear-gradient(#dfe6ee, #dfe6ee) center / 1px 5px no-repeat, #080c14; }
  .ceiltext { display: flex; justify-content: space-between; padding: 0 7px 0 2px; }

  .scroll { display: flex; height: 15px; border: solid #2c3a54; border-width: 1px 0; background: #b9c2d1; margin: 0 2px 1px 0; }
  .outs .scroll { margin: 0 0 1px; }
  .ins .scroll { margin: 0 0 1px; }
  .arr { width: 15px; flex: none; display: grid; place-items: center; background: #cdd5e0; border: solid #2c3a54; border-width: 0 1px; }
  .lead { flex: 0 0 64px; background: linear-gradient(#c6cedb, #b2bccb); }
  .thumb { flex: 1; background: linear-gradient(#a6b4ca, #90a1bb); border: solid #2c3a54; border-width: 0 1px; }
  .free { flex: 0 0 128px; background: linear-gradient(#c6cedb, #b2bccb); }
  .ins .free, .outs .free { flex: 1; }
</style>
